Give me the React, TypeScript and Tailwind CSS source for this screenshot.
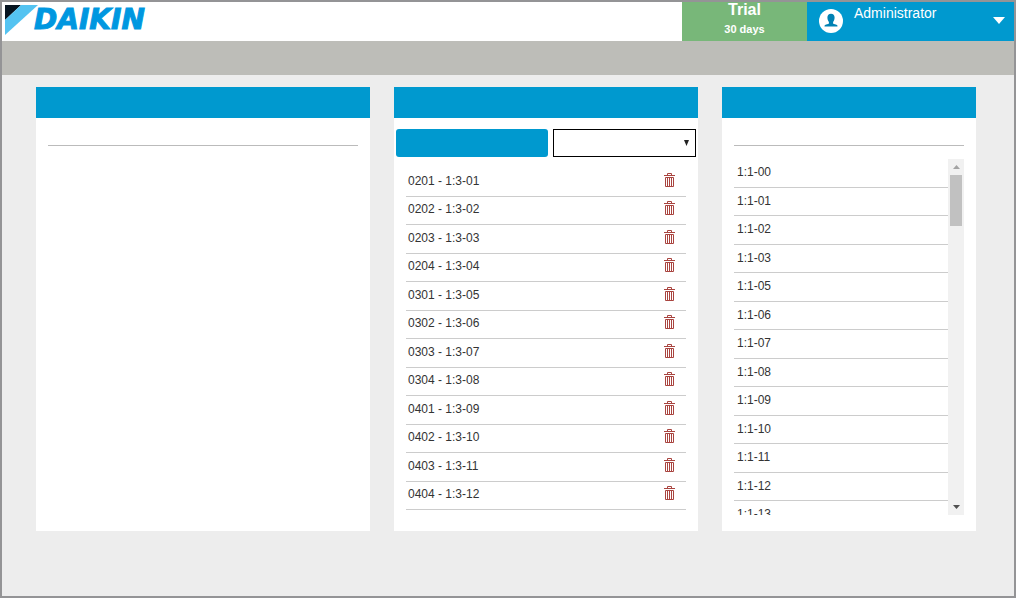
import type { ReactNode } from "react";

const assigned = [
  "0201 - 1:3-01",
  "0202 - 1:3-02",
  "0203 - 1:3-03",
  "0204 - 1:3-04",
  "0301 - 1:3-05",
  "0302 - 1:3-06",
  "0303 - 1:3-07",
  "0304 - 1:3-08",
  "0401 - 1:3-09",
  "0402 - 1:3-10",
  "0403 - 1:3-11",
  "0404 - 1:3-12",
];

const available = [
  "1:1-00",
  "1:1-01",
  "1:1-02",
  "1:1-03",
  "1:1-05",
  "1:1-06",
  "1:1-07",
  "1:1-08",
  "1:1-09",
  "1:1-10",
  "1:1-11",
  "1:1-12",
  "1:1-13",
];

function Logo() {
  return (
    <a href="#" className="flex pt-[3px] pl-[3px] no-underline">
      <svg className="h-[30px] w-[33px]" viewBox="0 0 33 30" aria-hidden="true">
        <path d="M0 0H16L0 15Z" fill="#06131f" />
        <path d="M16 0H33L0 30V15Z" fill="#54c3f1" />
      </svg>
      <span className="-ml-1 font-['DejaVu_Sans'] text-[28px] leading-[29px] font-bold italic text-[#0097e0] [-webkit-text-stroke:1px_#0097e0]">
        DAIKIN
      </span>
    </a>
  );
}

function UserIcon() {
  return (
    <svg className="size-6" viewBox="0 0 24 24" aria-hidden="true">
      <circle cx="12" cy="12" r="12" fill="#fff" />
      <path
        d="M12 4.800c2.300 0 3.600 1.500 3.600 3.800 0 1.900-.6 3.400-1.500 4.300v1.500c.3.700 3.500 1 4 1.700.3.400.4.900.4 1.400h-13c0-.5.1-1 .4-1.400.5-.7 3.700-1 4-1.700v-1.500c-.9-.9-1.500-2.400-1.500-4.300 0-2.300 1.300-3.800 3.600-3.800Z"
        fill="#0082b4"
      />
    </svg>
  );
}

function TrashIcon() {
  return (
    <svg className="h-[14px] w-[11px]" viewBox="0 0 11 14" fill="none" stroke="#a9443f" aria-hidden="true">
      <path d="M3.500 2V.5h4V2M0 2.500h11M1.500 4.500h8v9h-8ZM3.500 5v8M5.500 5v8M7.500 5v8" />
    </svg>
  );
}

function Panel({ label, children }: { label: string; children?: ReactNode }) {
  return (
    <section aria-label={label} className="flex min-h-0 min-w-0 flex-col bg-white">
      <div className="h-[31px] shrink-0 bg-[#0099cf]" />
      {children}
    </section>
  );
}

export default function App() {
  return (
    <div className="flex h-screen flex-col border-2 border-[#949496] bg-[#ededed] font-['Liberation_Sans',sans-serif] text-xs text-[#333]">
      <header className="flex h-[39px] shrink-0 bg-white">
        <Logo />
        <div className="ml-auto flex w-[125px] flex-col items-center bg-[#78b779] text-white">
          <span className="text-base leading-4 font-bold">Trial</span>
          <span className="pt-[3px] text-[11px] leading-4 font-bold">30 days</span>
        </div>
        <button className="flex w-[207px] items-start bg-[#0099cf] pr-[9px] pl-3 text-white">
          <span className="pt-[7px]">
            <UserIcon />
          </span>
          <span className="pt-[3px] pl-[11px] text-sm leading-4">Administrator</span>
          <svg className="mt-[15px] ml-auto h-[7px] w-3" viewBox="0 0 12 7" fill="#fff" aria-hidden="true">
            <path d="M0 0h12L6 7Z" />
          </svg>
        </button>
      </header>
      <nav aria-label="Main" className="h-[34px] shrink-0 bg-[#bdbdb8]" />

      <main className="grid min-h-0 flex-1 grid-cols-[334fr_304fr_254fr] grid-rows-1 gap-6 pt-3 pr-[38px] pb-[65px] pl-[34px]">
        <Panel label="Details">
          <hr className="mx-3 mt-[27px] border-[#bbb]" />
        </Panel>

        <Panel label="Assigned units">
          <div className="flex gap-[5px] px-0.5 pt-[11px]">
            <button aria-label="Add" className="h-7 flex-[152] rounded-[3px] bg-[#0099cf]" />
            <div className="relative flex-[143]">
              <select
                aria-label="Group"
                className="block h-7 w-full appearance-none border border-black bg-white px-2"
              />
              <svg
                className="pointer-events-none absolute top-[11px] right-[7px] h-[6px] w-[5px]"
                viewBox="0 0 5 6"
                fill="#222"
                aria-hidden="true"
              >
                <path d="M0 0h5L2.500 6Z" />
              </svg>
            </div>
          </div>
          <ul className="mx-3 mt-[11px] mb-[21px] flex flex-1 flex-col">
            {assigned.map((name) => (
              <li key={name} className="flex flex-1 items-center justify-between border-b border-[#ccc] pr-[11px] pl-0.5">
                <span className="pb-0.5 leading-4">{name}</span>
                <button aria-label={`Remove ${name}`} className="pb-1">
                  <TrashIcon />
                </button>
              </li>
            ))}
          </ul>
        </Panel>

        <Panel label="Available units">
          <hr className="mx-3 mt-[27px] border-[#bbb]" />
          <div className="mx-3 mt-[13px] mb-4 flex min-h-0 flex-1">
            <ul className="flex-1 overflow-hidden">
              {available.map((name) => (
                <li
                  key={name}
                  className="flex items-center border-b border-[#ccc] pb-0.5 pl-[3px] odd:h-[29px] even:h-7"
                >
                  <span className="leading-4">{name}</span>
                </li>
              ))}
            </ul>
            <div className="flex w-4 flex-col items-center bg-[#f1f1f1]">
              <button aria-label="Scroll up" className="flex h-4 items-center justify-center">
                <svg className="h-1 w-[7px]" viewBox="0 0 7 4" fill="#a3a3a3" aria-hidden="true">
                  <path d="M0 4h7L3.500 0Z" />
                </svg>
              </button>
              <div className="h-[51px] w-3 bg-[#c1c1c1]" />
              <button aria-label="Scroll down" className="mt-auto flex h-4 items-center justify-center">
                <svg className="h-1 w-[7px]" viewBox="0 0 7 4" fill="#505050" aria-hidden="true">
                  <path d="M0 0h7L3.500 4Z" />
                </svg>
              </button>
            </div>
          </div>
        </Panel>
      </main>
    </div>
  );
}
